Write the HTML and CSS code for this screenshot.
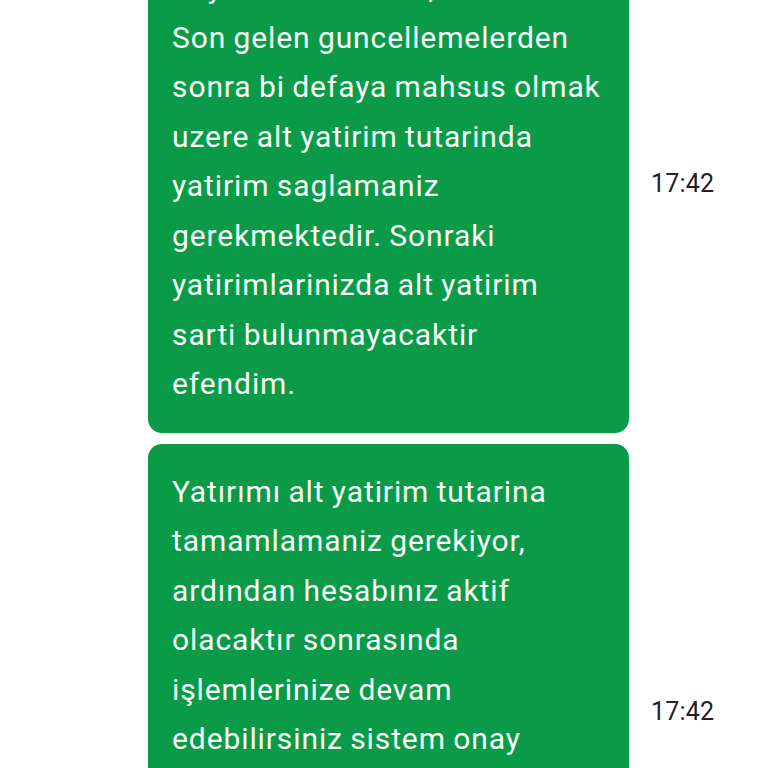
FILE: index.html
```html
<!DOCTYPE html>
<html lang="tr">
<head>
<meta charset="utf-8">
<link rel="stylesheet" href="styles.css">
</head>
<body>
<div class="chat">
  <div class="row">
    <div class="bubble">Sayın Kullanıcımız,<br>Son gelen guncellemelerden<br>sonra bi defaya mahsus olmak<br>uzere alt yatirim tutarinda<br>yatirim saglamaniz<br>gerekmektedir. Sonraki<br>yatirimlarinizda alt yatirim<br>sarti bulunmayacaktir<br>efendim.</div>
    <div class="time">17:42</div>
  </div>
  <div class="row">
    <div class="bubble">Yatırımı alt yatirim tutarina<br>tamamlamaniz gerekiyor,<br>ardından hesabınız aktif<br>olacaktır sonrasında<br>işlemlerinize devam<br>edebilirsiniz sistem onay<br>verdikten sonra<br>çekim talebinizi<br>oluşturabilirsiniz<br>efendim.</div>
    <div class="time">17:42</div>
  </div>
</div>
</body>
</html>
```
FILE: styles.css
```css
html, body {
  margin: 0;
  padding: 0;
  background: #ffffff;
  overflow: hidden;
}
.chat {
  margin-top: -60px;
  display: flex;
  flex-direction: column;
  gap: 11px;
}
.row {
  display: flex;
  align-items: center;
  padding-left: 148px;
}
.bubble {
  width: 481px;
  box-sizing: border-box;
  background: #0b9a47;
  color: #f6fff8;
  border-radius: 14px;
  padding: 23px 12px 24px 24px;
  font-family: Roboto, "Noto Sans", sans-serif;
  font-size: 30px;
  letter-spacing: 0.9px;
  word-spacing: -1px;
  line-height: 49.5px;
  white-space: nowrap;
}
.time {
  margin-left: 22px;
  margin-top: -6px;
  font-family: Roboto, "Noto Sans", sans-serif;
  font-size: 25px;
  letter-spacing: 0.2px;
  color: #222222;
}
```
